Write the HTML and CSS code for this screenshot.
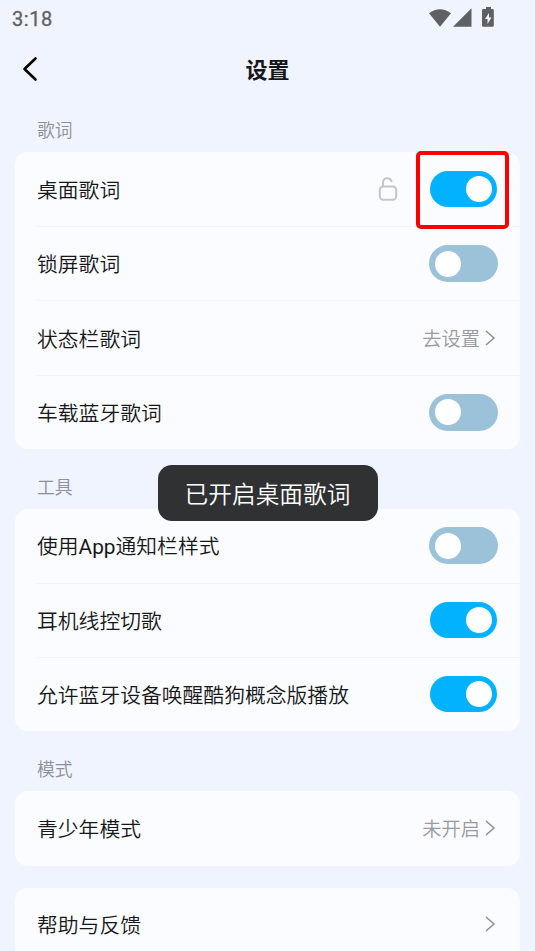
FILE: index.html
```html
<!DOCTYPE html>
<html lang="zh-CN">
<head>
<meta charset="utf-8">
<title>设置</title>
<link rel="stylesheet" href="styles.css">
</head>
<body>
<div class="status">
  <span class="time">3:18</span>
  <svg class="status-icons" width="68" height="22" viewBox="0 0 68 22">
    <path d="M0 5.3Q11 -2.8 22 5.3L11 18.7Z"/>
    <path d="M42.5 .2V18.7H24Z"/>
    <path fill-rule="evenodd" d="M57-1H62V1H63.500Q64.800 1 64.800 2.300V17.400Q64.800 18.700 63.500 18.700H54.300Q53 18.700 53 17.400V2.300Q53 1 54.300 1H57ZM60 5L56 11H58.500V16L62.500 9.500H60Z"/>
  </svg>
</div>
<header class="header">
  <svg class="back" width="16" height="26" viewBox="0 0 16 26"><path d="M13.500 2.500L2.500 13L13.500 23.500"/></svg>
  <h1>设置</h1>
</header>
<main>
  <h2 class="first">歌词</h2>
  <section class="card">
    <div class="row"><span class="name">桌面歌词</span>
      <svg class="lock" width="20" height="24" viewBox="0 0 20 24"><rect x="1.800" y="9.500" width="16.400" height="13.200" rx="3.500"/><path d="M5 9.500V6Q5 1.300 9.300 1.300Q12.800 1.300 13.700 5"/></svg>
      <span class="toggle on"><span class="highlight"></span></span></div>
    <div class="row"><span class="name">锁屏歌词</span><span class="toggle"></span></div>
    <div class="row"><span class="name">状态栏歌词</span><span class="value">去设置</span><svg class="chevron" width="12" height="18" viewBox="0 0 12 18"><path d="M2 2L10 9L2 16"/></svg></div>
    <div class="row"><span class="name">车载蓝牙歌词</span><span class="toggle"></span></div>
  </section>
  <h2>工具</h2>
  <section class="card tools">
    <div class="row"><span class="name">使用<span class="latin">App</span>通知栏样式</span><span class="toggle"></span></div>
    <div class="row"><span class="name">耳机线控切歌</span><span class="toggle on"></span></div>
    <div class="row"><span class="name">允许蓝牙设备唤醒酷狗概念版播放</span><span class="toggle on"></span></div>
  </section>
  <h2>模式</h2>
  <section class="card">
    <div class="row"><span class="name">青少年模式</span><span class="value">未开启</span><svg class="chevron" width="12" height="18" viewBox="0 0 12 18"><path d="M2 2L10 9L2 16"/></svg></div>
  </section>
  <section class="card separate">
    <div class="row"><span class="name">帮助与反馈</span><svg class="chevron" width="12" height="18" viewBox="0 0 12 18"><path d="M2 2L10 9L2 16"/></svg></div>
  </section>
</main>
<div class="toast">已开启桌面歌词</div>
</body>
</html>
```
FILE: styles.css
```css
* { box-sizing: border-box; }
html, body { height: 951px; overflow: hidden; }
body {
  margin: 0;
  position: relative;
  background: #f0f4ff;
  color: #161719;
  font-family: "Noto Sans CJK SC", sans-serif;
  font-weight: 350;
}
svg { display: block; flex: none; fill: none; }
.status {
  height: 38px;
  padding: 0 38px 0 12px;
  display: flex;
  align-items: center;
  justify-content: space-between;
}
.time {
  font: 400 20px/24px Roboto, sans-serif;
  letter-spacing: .6px;
  color: #5f6064;
  -webkit-text-stroke: .3px #5f6064;
}
.status-icons { fill: #5f6064; overflow: visible; }
.header {
  height: 62px;
  padding: 0 22px;
  display: grid;
  grid-template-columns: 16px 1fr 16px;
  align-items: center;
}
.back { stroke: #000; stroke-width: 2.6; stroke-linecap: round; stroke-linejoin: round; }
h1 { margin: 0; padding-bottom: 2px; text-align: center; font-size: 22px; line-height: 32px; font-weight: 700; }
main { padding: 0 15px; }
h2 {
  margin: 0;
  height: 60px;
  padding: 24px 22px 0;
  font-size: 17.8px;
  line-height: 26px;
  font-weight: 350;
  color: #8d9099;
}
h2.first { height: 52px; padding-top: 16px; }
.card { background: #fbfcff; border-radius: 13px; }
.card.separate { margin-top: 22px; }
.row {
  height: 74.2px;
  margin-left: 22px;
  padding-right: 22px;
  display: flex;
  align-items: center;
}
.row + .row { border-top: 1px solid #f2f4f9; }
.name { flex: 1; padding-bottom: .6px; font-size: 20.8px; line-height: 30px; }
.tools .name, .separate .name { padding-bottom: 2px; }
.latin { font-family: Roboto, sans-serif; font-weight: 400; line-height: 1; }
.value { font-size: 19.3px; line-height: 28px; color: #999a9d; margin-right: 4px; }
.chevron { stroke: #8f919c; stroke-width: 1.6; margin-right: 2px; }
.card.separate .chevron { margin-bottom: 1px; }
.lock { stroke: #c5c6ca; stroke-width: 2; margin-right: 32px; }
.toggle {
  width: 69px;
  height: 37px;
  padding: 6px;
  border-radius: 19px;
  background: #9bc2d9;
  display: flex;
  align-items: center;
}
.toggle::before {
  content: "";
  width: 26px;
  height: 26px;
  border-radius: 50%;
  background: #fff;
}
.toggle.on {
  position: relative;
  width: 67px;
  height: 36px;
  margin-right: 1px;
  padding-right: 5px;
  margin-bottom: 1px;
  background: #00b2ff;
  justify-content: flex-end;
}
.highlight {
  position: absolute;
  inset: -20px -12px -22px -14px;
  border: 4px solid #fe0000;
  border-radius: 5px;
}
.toast {
  position: absolute;
  left: 157.500px;
  top: 465px;
  width: 220px;
  height: 56px;
  border-radius: 14px;
  background: #303132;
  color: #fff;
  font-size: 23.7px;
  line-height: 56px;
  text-align: center;
}
```
